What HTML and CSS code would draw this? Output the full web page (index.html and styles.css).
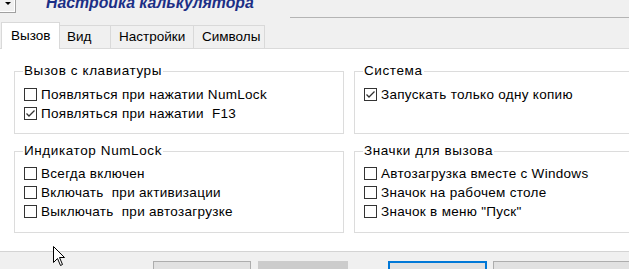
FILE: index.html
```html
<!DOCTYPE html>
<html lang="ru">

<head>
    <meta charset="UTF-8">
    <title>Настройка калькулятора</title>
    <link rel="stylesheet" href="styles.css">
</head>

<body>
    <div class="titlebar">
        <div class="menu-btn"><span class="arrow"></span></div>
        <div class="title">Настройка калькулятора</div>
        <div class="title-rule"></div>
    </div>

    <ul class="tabs">
        <li class="tab active w1">Вызов</li>
        <li class="tab w2">Вид</li>
        <li class="tab w3">Настройки</li>
        <li class="tab w4">Символы</li>
    </ul>

    <main class="panel">
        <fieldset class="group">
            <legend>Вызов с клавиатуры</legend>
            <label class="check"><span class="box"></span>Появляться при нажатии NumLock</label>
            <label class="check"><span class="box checked"></span>Появляться при нажатии&nbsp; F13</label>
        </fieldset>

        <fieldset class="group">
            <legend>Система</legend>
            <label class="check"><span class="box checked"></span>Запускать только одну копию</label>
        </fieldset>

        <fieldset class="group second">
            <legend>Индикатор NumLock</legend>
            <label class="check"><span class="box"></span>Всегда включен</label>
            <label class="check"><span class="box"></span>Включать&nbsp; при активизации</label>
            <label class="check"><span class="box"></span>Выключать&nbsp; при автозагрузке</label>
        </fieldset>

        <fieldset class="group second">
            <legend>Значки для вызова</legend>
            <label class="check"><span class="box"></span>Автозагрузка вместе с Windows</label>
            <label class="check"><span class="box"></span>Значок на рабочем столе</label>
            <label class="check"><span class="box"></span>Значок в меню "Пуск"</label>
        </fieldset>
    </main>

    <div class="footer">
        <button class="btn b1"></button>
        <button class="btn b2"></button>
        <button class="btn b3 default"></button>
        <button class="btn b4"></button>
    </div>

    <svg class="cursor" width="13" height="22" viewBox="0 0 13 22">
        <path d="M0.5 0.5 L0.5 16.5 L4.5 12.5 L7.5 19.5 L9.5 18.5 L6.5 11.5 L11.5 11.5 Z" fill="#fff" stroke="#000" stroke-width="1"/>
    </svg>
</body>

</html>
```

FILE: styles.css
```css
body {
    margin: 0;
    width: 629px;
    height: 269px;
    overflow: hidden;
    background-color: #f0f0f0;
    color: #000;
    font-family: "Liberation Sans", Arial, sans-serif;
    font-size: 13.5px;
    letter-spacing: 0.3px;
    position: relative;
}

.titlebar {
    display: flex;
    align-items: flex-start;
    height: 18px;
}

.menu-btn {
    width: 16px;
    height: 13px;
    border-right: 1px solid #a0a0a0;
    border-bottom: 1px solid #a0a0a0;
    box-shadow: inset -1px -1px 0 #fff;
    display: flex;
    justify-content: center;
    padding-top: 2px;
    box-sizing: border-box;
    flex-shrink: 0;
}

.arrow {
    width: 0;
    height: 0;
    border-left: 3px solid transparent;
    border-right: 3px solid transparent;
    border-top: 3px solid #000;
}

.title {
    margin: -5px 0 0 30px;
    font-size: 15.8px;
    letter-spacing: 0;
    line-height: 16px;
    font-weight: bold;
    font-style: italic;
    color: #1c2f86;
    white-space: nowrap;
}

.title-rule {
    flex: 1;
    margin-left: 36px;
    height: 17px;
    border-bottom: 1px solid #b4b4b4;
}

.tabs {
    display: flex;
    align-items: flex-end;
    list-style: none;
    margin: 4px 0 0;
    padding: 0 0 0 1px;
    height: 26px;
    border-bottom: 1px solid #dadada;
    letter-spacing: 0;
}

.tab {
    height: 23px;
    line-height: 22px;
    box-sizing: border-box;
    border: 1px solid #d9d9d9;
    border-bottom: none;
    margin-left: -1px;
    padding-left: 7px;
    background-color: #f0f0f0;
    white-space: nowrap;
}

.tab.active {
    height: 27px;
    line-height: 26px;
    margin-bottom: -1px;
    margin-left: 0;
    padding-left: 9px;
    background-color: #fff;
    position: relative;
}

.w1 { width: 59px; }
.w2 { width: 52px; }
.w3 { width: 84px; padding-left: 8px; }
.w4 { width: 72px; padding-left: 8px; }

.panel {
    display: grid;
    grid-template-columns: 330px 330px;
    column-gap: 10px;
    row-gap: 10px;
    height: 203px;
    box-sizing: border-box;
    padding: 15px 0 0 14px;
    background-color: #fff;
    border-bottom: 1px solid #d4d4d4;
    align-content: start;
}

.group {
    margin: 0;
    padding: 7px 9px 10px;
    border: 1px solid #dcdcdc;
    display: flex;
    flex-direction: column;
    min-width: 0;
}

.group.second {
    padding-top: 6px;
    padding-bottom: 11px;
}

legend {
    padding: 0 1px;
    margin-left: -1px;
    line-height: 14px;
    letter-spacing: 0.6px;
}

.check {
    display: flex;
    align-items: center;
    height: 19px;
    white-space: nowrap;
}

.box {
    width: 13px;
    height: 13px;
    box-sizing: border-box;
    border: 1px solid #333;
    background-color: #fff;
    margin-right: 4px;
    flex-shrink: 0;
}

.box.checked {
    background: #fff url("data:image/svg+xml,%3Csvg xmlns='http://www.w3.org/2000/svg' width='11' height='11'%3E%3Cpath d='M1.5 5.5 L4 8 L9.5 2.5' fill='none' stroke='%23333' stroke-width='1.3'/%3E%3C/svg%3E") no-repeat center;
}

.footer {
    display: flex;
    padding: 9px 0 0 153px;
}

.btn {
    height: 25px;
    flex-shrink: 0;
    padding: 0;
    background-color: #e1e1e1;
    border: 1px solid #adadad;
    box-sizing: border-box;
}

.b1 { width: 98px; }
.b2 { width: 90px; margin-left: 7px; background-color: #cccccc; border-color: #cccccc; }
.b3 { width: 99px; margin-left: 40px; }
.b4 { width: 140px; margin-left: 6px; }

.btn.default {
    border: 2px solid #0078d7;
}

.cursor {
    position: absolute;
    left: 53px;
    top: 246px;
}
```
